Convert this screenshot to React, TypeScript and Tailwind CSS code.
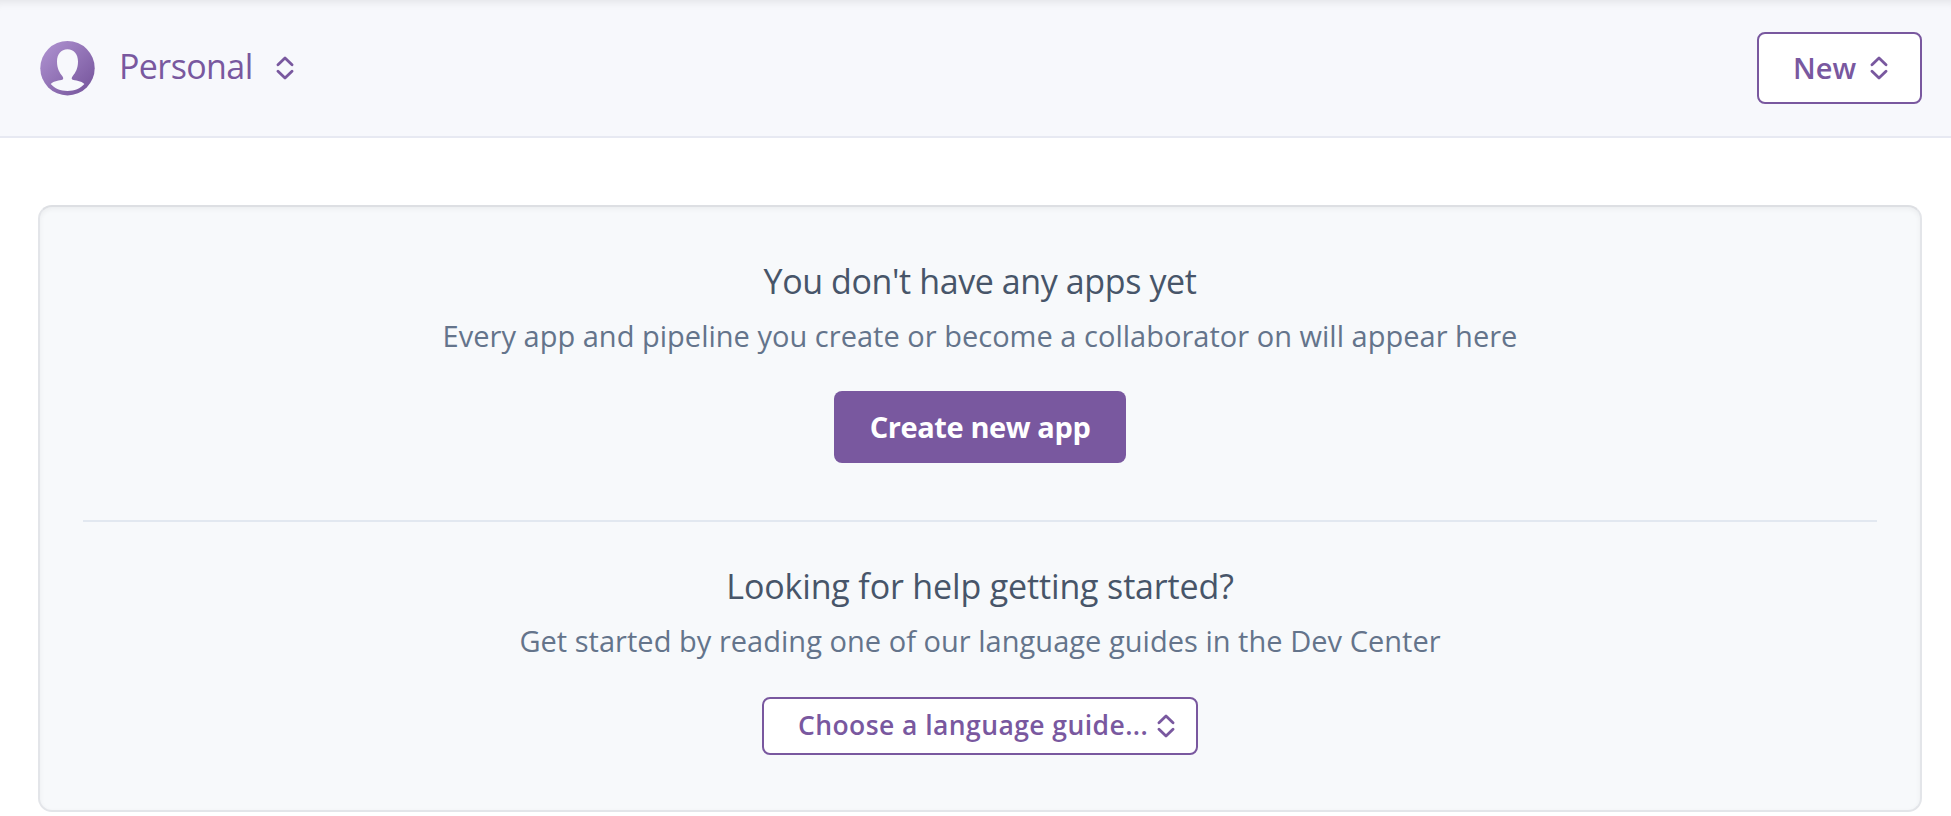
function Chevrons({ className = "" }: { className?: string }) {
  return (
    <svg
      className={`h-6 w-[18px] shrink-0 ${className}`}
      viewBox="0 0 18 24"
      fill="none"
      stroke="#79589f"
      strokeWidth="2.8"
      strokeLinecap="round"
      strokeLinejoin="round"
      aria-hidden="true"
    >
      <path d="M2 8.700 9 1.900l7 6.800M2 15.300l7 6.800 7-6.800" />
    </svg>
  );
}

function Avatar() {
  return (
    <svg className="size-[55px] shrink-0" viewBox="0 0 55 55" aria-hidden="true">
      <defs>
        <linearGradient id="avatar" x1="0" y1="0" x2="1" y2="1">
          <stop offset="0.1" stopColor="#ab8ecd" />
          <stop offset="0.9" stopColor="#79589f" />
        </linearGradient>
      </defs>
      <circle cx="27.5" cy="27.2" r="27.2" fill="url(#avatar)" />
      <path
        fill="#f7f8fc"
        d="M27.5 8.3c-6.500 0-10.500 5-10.500 12.300 0 7 2.500 11.200 5.400 14.700.9 1.300 1.100 2.500.3 3.300-3 1.200-9 1.300-12 4.500 4 4.600 9.800 6.900 16.800 6.900s12.800-2.300 16.900-6.900c-3-3.200-9.300-3.300-12.200-4.500-.8-.8-.5-2 .4-3.300 2.900-3.500 5.400-7.700 5.400-14.700 0-7.300-4-12.300-10.500-12.300z"
      />
    </svg>
  );
}

export default function App() {
  return (
    <div className="flex h-[816px] flex-col overflow-hidden bg-white font-['Open_Sans',sans-serif] whitespace-nowrap">
      <header className="flex h-[138px] shrink-0 items-center justify-between border-b-2 border-[#e7e9f2] bg-[#f7f8fc] pr-[29px] pl-10 shadow-[inset_0_10px_10px_-8px_rgba(0,0,0,0.09)]">
        <button className="flex items-center text-[34px] leading-[48px] text-[#79589f]">
          <Avatar />
          <span className="mb-1 ml-6 w-[157px] text-left tracking-[-0.6px]">Personal</span>
          <Chevrons />
        </button>
        <button className="flex h-[72px] w-[165px] items-center rounded-lg border-2 border-[#79589f] bg-white pl-[34px] text-[29px] font-semibold text-[#79589f]">
          <span className="mb-px w-[77px] text-left">New</span>
          <Chevrons />
        </button>
      </header>

      <main className="mt-[67px] mr-[29px] ml-[38px] flex h-[607px] shrink-0 flex-col rounded-[14px] border-2 border-[#e3e5e9] border-t-[#dddfe3] bg-[#f7f9fb] px-[43px] shadow-[inset_0_2px_5px_rgba(0,0,0,0.05)]">
        <section className="flex h-[315px] flex-col items-center border-b-2 border-[#e2e8f0] pt-12">
          <h2 className="text-[34px] leading-[52px] tracking-[-0.4px] text-[#475569]">You don't have any apps yet</h2>
          <p className="mt-1 text-[29px] leading-[50px] tracking-[0.02px] text-[#64748b]">
            Every app and pipeline you create or become a collaborator on will appear here
          </p>
          <button className="mt-[30px] flex h-[72px] w-[292px] items-center justify-center rounded-lg bg-[#79589f] text-[29px] font-bold tracking-[-0.4px] text-white">
            Create new app
          </button>
        </section>
        <section className="flex flex-col items-center pt-[38px]">
          <h2 className="text-[34px] leading-[52px] tracking-[-0.15px] text-[#475569]">Looking for help getting started?</h2>
          <p className="mt-1 text-[29px] leading-[50px] tracking-[0.03px] text-[#64748b]">
            Get started by reading one of our language guides in the Dev Center
          </p>
          <button className="mt-[31px] flex h-[58px] w-[436px] items-center rounded-lg border-2 border-[#79589f] bg-white pl-[34px] text-[26.500px] font-semibold tracking-[0.43px] text-[#79589f]">
            <span className="w-[359px] text-left">Choose a language guide...</span>
            <Chevrons />
          </button>
        </section>
      </main>
    </div>
  );
}
